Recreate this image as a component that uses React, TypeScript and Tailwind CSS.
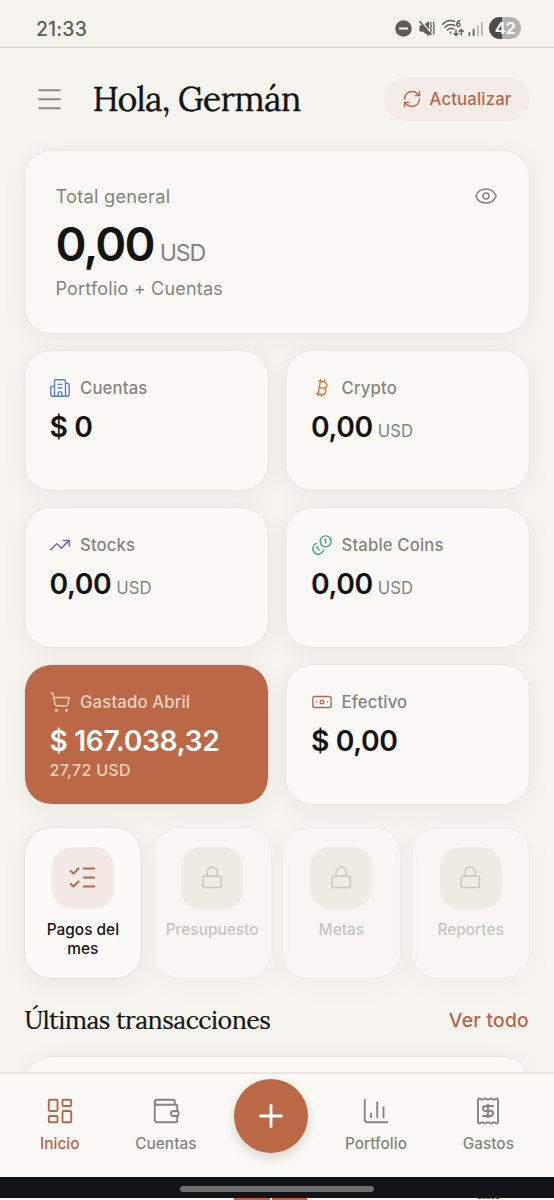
import type { ReactNode } from "react";
import {
  Banknote,
  Bitcoin,
  Building2,
  ChartColumn,
  Eye,
  LayoutDashboard,
  ListChecks,
  Lock,
  RefreshCw,
  ShoppingCart,
  TrendingUp,
  Wallet,
} from "lucide-react";

const cardShadow = "shadow-[0_5px_26px_rgba(60,55,45,0.055)]";

function CoinsIcon() {
  return (
    <svg width="22" height="22" viewBox="0 0 24 24" fill="none" stroke="currentColor" strokeWidth="1.5" strokeLinecap="round" strokeLinejoin="round">
      <path d="M13.744 17.736a6 6 0 1 1-7.48-7.48" />
      <path d="M15 6h1v4" />
      <path d="m6.134 14.768.866-.5 2 3.464" />
      <circle cx="16" cy="8" r="6" />
    </svg>
  );
}

function ReceiptIcon() {
  return (
    <svg width="30" height="30" viewBox="0 0 24 24" fill="none" stroke="currentColor" strokeWidth="1.5" strokeLinecap="round" strokeLinejoin="round">
      <path d="M12 17V7" />
      <path d="M16 8h-6a2 2 0 0 0 0 4h4a2 2 0 0 1 0 4H8" />
      <path d="M4 3a1 1 0 0 1 1-1 1.3 1.3 0 0 1 .7.2l.933.6a1.3 1.3 0 0 0 1.4 0l.934-.6a1.3 1.3 0 0 1 1.4 0l.933.6a1.3 1.3 0 0 0 1.4 0l.933-.6a1.3 1.3 0 0 1 1.4 0l.934.6a1.3 1.3 0 0 0 1.4 0l.933-.6A1.3 1.3 0 0 1 19 2a1 1 0 0 1 1 1v18a1 1 0 0 1-1 1 1.3 1.3 0 0 1-.7-.2l-.933-.6a1.3 1.3 0 0 0-1.4 0l-.934.6a1.3 1.3 0 0 1-1.4 0l-.933-.6a1.3 1.3 0 0 0-1.4 0l-.933.6a1.3 1.3 0 0 1-1.4 0l-.934-.6a1.3 1.3 0 0 0-1.4 0l-.933.6a1.3 1.3 0 0 1-.7.2 1 1 0 0 1-1-1z" />
    </svg>
  );
}

function StatusBar() {
  return (
    <div className="flex h-12 shrink-0 items-center justify-between border-b-[1.5px] border-[#d6d5d0] pr-[33px] pl-9 pt-[9px] text-[#5e5e59]">
      <span className="mt-[1px] text-[19.5px] font-medium leading-6 tracking-[0.1px]">21:33</span>
      <div className="flex items-center">
        <svg width="17" height="17" viewBox="0 0 17 17">
          <circle cx="8.5" cy="8.5" r="8.3" fill="currentColor" />
          <path d="M4 8.5h9" stroke="#f5f4ef" strokeWidth="2" />
        </svg>
        <svg className="ml-[7px]" width="16" height="17" viewBox="0 0 16 17" fill="none">
          <path d="M0.5 5.5h3.2L10 1v15L3.7 11.5H0.5z" fill="currentColor" />
          <path d="M1.200 0 12.500 13.500" stroke="#f5f4ef" strokeWidth="1.600" />
          <path d="M0.500 1.200 12 15" stroke="currentColor" strokeWidth="1.500" />
          <path d="M12.200 2l-.9 2 1.200 2-1.200 2 1.200 2-1.200 2.200 1 2.300M15.200 2l-.9 2 1.200 2-1.200 2 1.200 2-1.200 2.200 1 2.300" stroke="currentColor" strokeWidth="1.200" />
        </svg>
        <svg className="ml-[7px]" width="22" height="18" viewBox="0 0 22 18" fill="none" stroke="currentColor" strokeWidth="1.5" strokeLinecap="round">
          <path d="M.8 5.2C4 1.8 8.500 .8 12.500 2.500M3 8.300C5.600 5.500 9 4.800 12.700 6.500M5.500 11c2-2 4.300-2.100 6.300-.9" />
          <circle cx="8.500" cy="13.500" r="1" fill="currentColor" stroke="none" />
          <path d="M17.800 1.500C16 2 14.800 3.600 14.800 5.500" strokeWidth="1.300" />
          <circle cx="16.500" cy="5.800" r="1.700" strokeWidth="1.300" />
          <path d="M14 11v5.500m-2-2 2 2 2-2M19.300 16v-5.500m-2 2 2-2 2 2" strokeWidth="1.400" />
        </svg>
        <svg className="ml-[4px]" width="15" height="15" viewBox="0 0 15 15" fill="currentColor">
          <rect x="0.500" y="11" width="1.800" height="4" rx=".8" />
          <rect x="4.700" y="8" width="1.800" height="7" rx=".8" />
          <rect x="8.900" y="4" width="1.800" height="11" rx=".8" fill="#b9b8b3" />
          <rect x="13" y="0.500" width="1.800" height="14.500" rx=".8" fill="#b9b8b3" />
        </svg>
        <div className="ml-[6px] flex h-[22px] w-8 items-center justify-center rounded-full bg-[linear-gradient(90deg,#4b4b47_42%,#b4b3af_42%)] text-[16.500px] font-bold leading-none tracking-[-0.500px] text-[#f7f6f2]">
          42
        </div>
      </div>
    </div>
  );
}

type StatProps = { icon: ReactNode; label: string; value: string; unit?: string; note?: string; accent?: boolean };

function StatCard({ icon, label, value, unit, note, accent }: StatProps) {
  return (
    <div
      className={`flex h-[140.500px] flex-col rounded-[27px] border-[1.5px] pt-[25px] pl-[25px] ${cardShadow} ${
        accent ? "border-[#efe3d9] bg-[#bb6847] bg-clip-padding text-white" : "border-[#e6e5dc] bg-[#faf9f5] text-[#141412]"
      }`}
    >
      <div className="-ml-[0.500px] flex h-6 items-center gap-[9px]">
        {icon}
        <span className={`text-[16.700px] font-medium leading-6 tracking-[0.150px] ${accent ? "text-[#f3d3c0]" : "text-[#85847f]"}`}>{label}</span>
      </div>
      <div className="mt-[10px] flex items-baseline gap-[5px] leading-[34px]">
        <span className="text-[28.300px] font-semibold tracking-[-0.400px]">{value}</span>
        {unit && <span className="text-[16.700px] text-[#85847f]">{unit}</span>}
      </div>
      {note && <span className="mt-[2px] text-[16px] font-medium leading-5 tracking-[0.300px] text-[#f3d3c0]">{note}</span>}
    </div>
  );
}

function QuickCard({ label, locked }: { label: string; locked?: boolean }) {
  return (
    <div className={`flex h-[152px] flex-1 basis-0 flex-col items-center rounded-[27px] border-[1.5px] border-[#e3e2da] bg-[#fbfaf7] pt-[18.500px] ${cardShadow} ${locked ? "opacity-40" : ""}`}>
      <div className={`flex size-[62px] items-center justify-center rounded-[20px] ${locked ? "bg-[#ebe2d8] text-[#85847f]" : "bg-[#f4eae5] text-[#b9654a]"}`}>
        {locked ? <Lock size={24.500} strokeWidth={1.500} /> : <ListChecks size={31} strokeWidth={1.500} />}
      </div>
      <span className={`mt-[11px] max-w-[100px] text-center text-[15.400px] font-medium leading-[19.500px] tracking-[0.020px] ${locked ? "text-[#807f7a]" : "text-[#141412]"}`}>{label}</span>
    </div>
  );
}

function NavItem({ icon, label, active }: { icon: ReactNode; label: string; active?: boolean }) {
  return (
    <div className={`flex flex-col items-center px-[18.500px] pt-[22px] ${active ? "text-[#b9654a]" : "text-[#85847f]"}`}>
      {icon}
      <span className="mt-[8px] text-[15.400px] font-medium leading-5 tracking-[0.020px]">{label}</span>
    </div>
  );
}

export default function App() {
  return (
    <div className="flex h-[1200px] w-[554px] flex-col overflow-hidden bg-[#f5f4ef] font-['Inter',sans-serif] text-[#141412]">
      <StatusBar />

      <main className="flex h-[1024px] shrink-0 flex-col overflow-hidden pr-6 pl-[23.500px]">
        <header className="flex h-[102px] shrink-0 items-center">
          <svg className="ml-[10px] text-[#8b8a85]" width="31" height="31" viewBox="0 0 24 24" fill="none" stroke="currentColor" strokeWidth="1.500" strokeLinecap="round">
            <path d="M4 4.800h16M4 11.800h16M4 18.800h16" />
          </svg>
          <h1 className="-mt-[1px] ml-[28px] font-['Lora','Liberation_Serif',serif] text-[34px] font-normal leading-none tracking-[-0.800px] text-[#141412] [-webkit-text-stroke:0.300px_#141412]">
            Hola, Germán
          </h1>
          <button className="mr-[0.500px] ml-auto flex h-11 w-[146px] items-center justify-center gap-[8px] rounded-full bg-[#f4ece8] text-[16.700px] font-medium tracking-[0.180px] text-[#b9654a]">
            <RefreshCw size={20} strokeWidth={1.600} />
            <span className="pt-px">Actualizar</span>
          </button>
        </header>

        <section className={`flex h-[184px] shrink-0 justify-between rounded-[27px] border-[1.500px] border-[#e6e5dc] bg-[#faf9f5] pt-[33px] pr-[31px] pl-[31px] ${cardShadow}`}>
          <div className="flex flex-col">
            <span className="text-[18.200px] leading-6 tracking-[0.250px] text-[#85847f]">Total general</span>
            <div className="mt-[8px] flex h-[56px] items-baseline gap-[6px] leading-[56px]">
              <span className="text-[47px] font-semibold tracking-[-1.800px]">0,00</span>
              <span className="text-[23.200px] tracking-[-1.100px] text-[#85847f]">USD</span>
            </div>
            <span className="mt-[5px] text-[18px] leading-6 tracking-[0.200px] text-[#85847f]">Portfolio + Cuentas</span>
          </div>
          <Eye size={24} strokeWidth={1.500} className="text-[#85847f]" />
        </section>

        <section className="mt-4 grid shrink-0 grid-cols-2 gap-[16.500px]">
          <StatCard icon={<Building2 size={22} strokeWidth={1.500} className="text-[#5580d0]" />} label="Cuentas" value="$ 0" />
          <StatCard icon={<Bitcoin size={22} strokeWidth={1.500} className="text-[#d97736]" />} label="Crypto" value="0,00" unit="USD" />
          <StatCard icon={<TrendingUp size={22} strokeWidth={1.500} className="text-[#7c4fd0]" />} label="Stocks" value="0,00" unit="USD" />
          <StatCard icon={<span className="text-[#42a77c]"><CoinsIcon /></span>} label="Stable Coins" value="0,00" unit="USD" />
          <StatCard icon={<ShoppingCart size={22} strokeWidth={1.500} className="text-[#f3d3c0]" />} label="Gastado Abril" value="$ 167.038,32" note="27,72 USD" accent />
          <StatCard icon={<Banknote size={22} strokeWidth={1.500} className="text-[#b9654a]" />} label="Efectivo" value="$ 0,00" />
        </section>

        <section className="mt-[22.500px] flex shrink-0 gap-[10.500px]">
          <QuickCard label="Pagos del mes" />
          <QuickCard label="Presupuesto" locked />
          <QuickCard label="Metas" locked />
          <QuickCard label="Reportes" locked />
        </section>

        <div className="mt-[23px] flex h-9 shrink-0 items-center justify-between px-[1px]">
          <h2 className="font-['Lora','Liberation_Serif',serif] text-[25px] leading-none tracking-[-0.530px] [-webkit-text-stroke:0.200px_#141412]">Últimas transacciones</h2>
          <a className="text-[19.300px] font-medium leading-6 tracking-[0.250px] text-[#b9654a]">Ver todo</a>
        </div>
        <section className={`mt-[18px] h-20 shrink-0 rounded-[27px] border-[1.500px] border-[#e6e5dc] bg-[#faf9f5] ${cardShadow}`} />
      </main>

      <nav className="flex h-[105px] shrink-0 justify-between border-t-2 border-[#ebe7dd] bg-[#faf9f5] px-[21.500px]">
        <NavItem icon={<LayoutDashboard size={30} strokeWidth={1.500} />} label="Inicio" active />
        <NavItem icon={<Wallet size={30} strokeWidth={1.500} />} label="Cuentas" />
        <div className="mt-[5px] flex size-[74px] items-center justify-center rounded-full bg-[#bb6847] text-white shadow-[0_5px_12px_rgba(80,60,45,0.180)]">
          <svg width="36" height="36" viewBox="0 0 24 24" fill="none" stroke="currentColor" strokeWidth="1.900" strokeLinecap="round">
            <path d="M5 12h14M12 5v14" />
          </svg>
        </div>
        <NavItem icon={<ChartColumn size={30} strokeWidth={1.500} />} label="Portfolio" />
        <NavItem icon={<ReceiptIcon />} label="Gastos" />
      </nav>

      <div className="flex h-[21px] shrink-0 items-center justify-center bg-[#121317] pt-[3px]">
        <div className="h-[6px] w-[194px] rounded-full bg-[#6e6e6e]" />
      </div>
      <div className="flex h-[2px] shrink-0 bg-[#faf9f5] pl-[234px]">
        <div className="h-[2px] w-[36px] bg-[#bb6847]" />
        <div className="ml-[2px] h-[2px] w-[35px] bg-[#bb6847]" />
        <div className="ml-[171px] h-[2px] w-[21px] border-t border-dashed border-[#6e6e6e]" />
      </div>
    </div>
  );
}
